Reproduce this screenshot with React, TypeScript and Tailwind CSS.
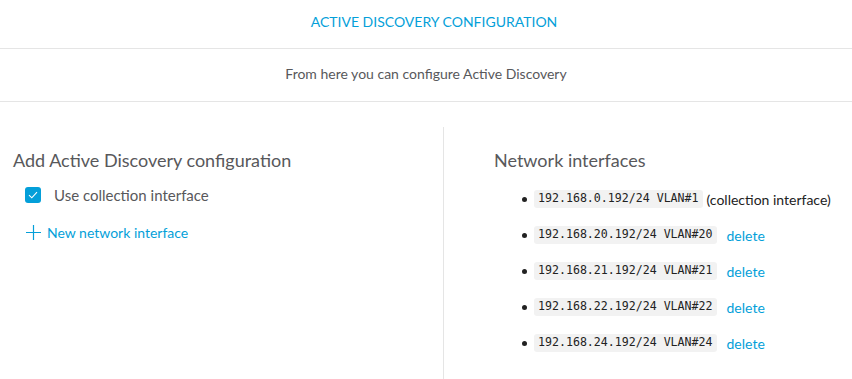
import React from "react";

const items = [
  { ip: "192.168.0.192/24 VLAN#1", collection: true },
  { ip: "192.168.20.192/24 VLAN#20" },
  { ip: "192.168.21.192/24 VLAN#21" },
  { ip: "192.168.22.192/24 VLAN#22" },
  { ip: "192.168.24.192/24 VLAN#24" },
];

export default function App() {
  return (
    <div className="w-[852px] h-[379px] bg-white overflow-hidden text-[#58585b]" style={{ fontFamily: "Lato, 'Noto Sans', sans-serif" }}>
      <div className="h-[49px] flex items-center justify-center border-b border-[#e5e5e5] text-[14px] text-[#049fd9] pb-[6px] pl-[16px]">
        ACTIVE DISCOVERY CONFIGURATION
      </div>
      <div className="h-[53px] flex items-center justify-center border-b border-[#e5e5e5] text-[14px] pb-[4px]">
        From here you can configure Active Discovery
      </div>
      <div className="flex pt-[25px] h-[277px]">
        <div className="w-[444px] border-r border-[#e5e5e5] pl-[13px] pt-[21px]">
          <div className="text-[18px] leading-[24px]">Add Active Discovery configuration</div>
          <div className="flex items-center mt-[13px] ml-[12px] h-[20px]">
            <div className="w-[16px] h-[16px] rounded-[3px] bg-[#049fd9] flex items-center justify-center">
              <svg width="10" height="8" viewBox="0 0 10 8" fill="none">
                <path d="M1 4.2 L3.8 6.8 L9 1.2" stroke="white" strokeWidth="1.1" />
              </svg>
            </div>
            <span className="ml-[13px] text-[15px]">Use collection interface</span>
          </div>
          <div className="flex items-center mt-[17px] ml-[12px] h-[20px] text-[14px] text-[#049fd9]">
            <svg width="17" height="17" viewBox="0 0 17 17" fill="none">
              <path d="M8.5 1 V16 M1 8.5 H16" stroke="#049fd9" strokeWidth="1.2" />
            </svg>
            <span className="ml-[5px]">New network interface</span>
          </div>
        </div>
        <div className="flex-1 pl-[50px] pt-[21px]">
          <div className="text-[18px] leading-[24px]">Network interfaces</div>
          <ul className="mt-[9px] ml-[28px]">
            {items.map((it) => (
              <li key={it.ip} className="flex items-center h-[36px]">
                <span className="w-[5px] h-[5px] rounded-full bg-[#222] mr-[7px]" />
                <code
                  className="bg-[#f2f2f2] rounded-[3px] px-[4px] h-[18px] flex items-center text-[11.6px] text-[#222]"
                  style={{ fontFamily: "'DejaVu Sans Mono', monospace" }}
                >
                  {it.ip}
                </code>
                {it.collection ? (
                  <span className="ml-[4px] text-[14px] text-[#222]">(collection interface)</span>
                ) : (
                  <span className="ml-[10px] text-[14px] text-[#049fd9]">delete</span>
                )}
              </li>
            ))}
          </ul>
        </div>
      </div>
    </div>
  );
}
